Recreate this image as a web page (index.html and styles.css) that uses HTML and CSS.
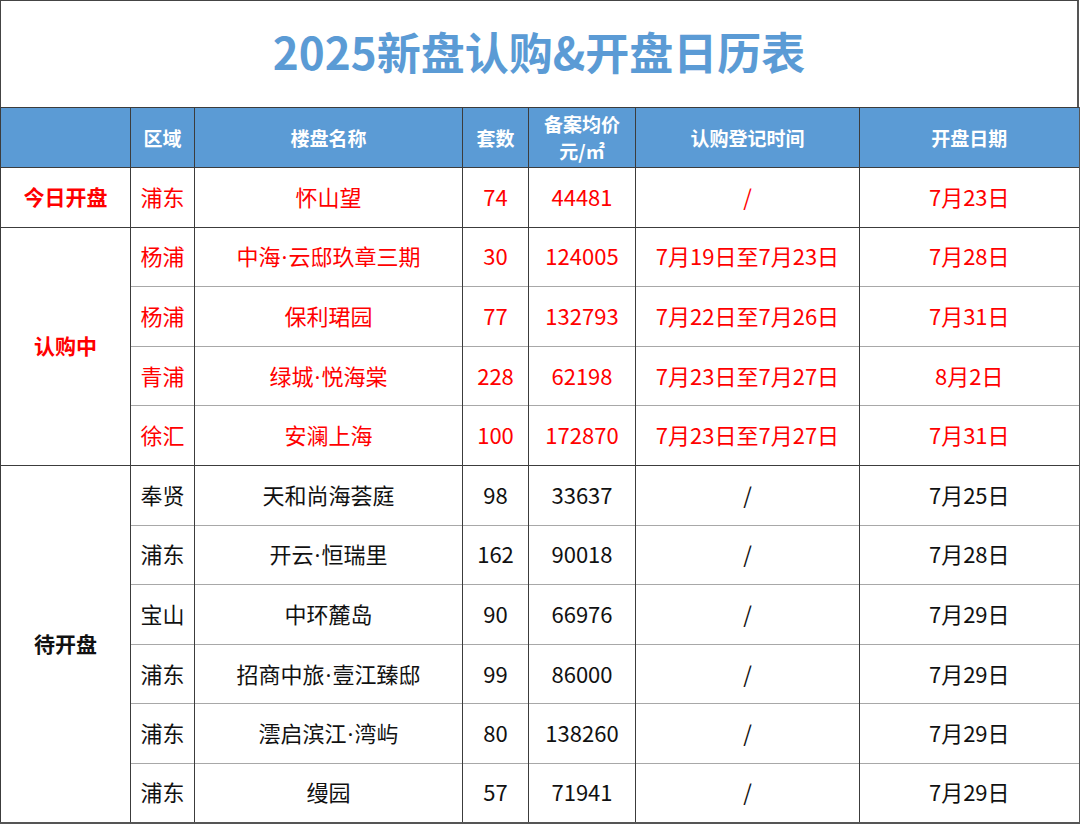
FILE: index.html
```html
<!DOCTYPE html>
<html lang="zh-CN">
<head>
<meta charset="utf-8">
<title>2025新盘认购&amp;开盘日历表</title>
<link rel="stylesheet" href="styles.css">
</head>
<body>
<div class="sheet">
  <div class="title">2025新盘认购&amp;开盘日历表</div>
  <table class="cal">
    <colgroup>
      <col class="c-cat"><col class="c-area"><col class="c-name"><col class="c-num"><col class="c-price"><col class="c-reg"><col class="c-open">
    </colgroup>
    <thead>
      <tr class="head">
        <th></th><th>区域</th><th>楼盘名称</th><th>套数</th><th class="two">备案均价<br>元/㎡</th><th>认购登记时间</th><th>开盘日期</th>
      </tr>
    </thead>
    <tbody>
      <tr class="red sec">
        <td class="cat">今日开盘</td><td>浦东</td><td>怀山望</td><td>74</td><td>44481</td><td>/</td><td>7月23日</td>
      </tr>
      <tr class="red sec">
        <td class="cat" rowspan="4">认购中</td><td>杨浦</td><td>中海<span class="dot">·</span>云邸玖章三期</td><td>30</td><td>124005</td><td>7月19日至7月23日</td><td>7月28日</td>
      </tr>
      <tr class="red">
        <td>杨浦</td><td>保利珺园</td><td>77</td><td>132793</td><td>7月22日至7月26日</td><td>7月31日</td>
      </tr>
      <tr class="red">
        <td>青浦</td><td>绿城<span class="dot">·</span>悦海棠</td><td>228</td><td>62198</td><td>7月23日至7月27日</td><td>8月2日</td>
      </tr>
      <tr class="red">
        <td>徐汇</td><td>安澜上海</td><td>100</td><td>172870</td><td>7月23日至7月27日</td><td>7月31日</td>
      </tr>
      <tr class="sec">
        <td class="cat black" rowspan="6">待开盘</td><td>奉贤</td><td>天和尚海荟庭</td><td>98</td><td>33637</td><td>/</td><td>7月25日</td>
      </tr>
      <tr>
        <td>浦东</td><td>开云<span class="dot">·</span>恒瑞里</td><td>162</td><td>90018</td><td>/</td><td>7月28日</td>
      </tr>
      <tr>
        <td>宝山</td><td>中环麓岛</td><td>90</td><td>66976</td><td>/</td><td>7月29日</td>
      </tr>
      <tr>
        <td>浦东</td><td>招商中旅<span class="dot">·</span>壹江臻邸</td><td>99</td><td>86000</td><td>/</td><td>7月29日</td>
      </tr>
      <tr>
        <td>浦东</td><td>澐启滨江<span class="dot">·</span>湾屿</td><td>80</td><td>138260</td><td>/</td><td>7月29日</td>
      </tr>
      <tr>
        <td>浦东</td><td>缦园</td><td>57</td><td>71941</td><td>/</td><td>7月29日</td>
      </tr>
    </tbody>
  </table>
</div>
</body>
</html>
```
FILE: styles.css
```css
* { box-sizing: border-box; }
html, body { margin: 0; padding: 0; background: #fff; }
body {
  font-family: "Noto Sans CJK SC", "Noto Sans", sans-serif;
  color: #111;
}
.sheet {
  width: 1080px;
  height: 824px;
  overflow: hidden;
}
.title {
  width: 1079px;
  height: 107px;
  border-top: 1px solid #444;
  border-left: 1px solid #444;
  border-right: 2px solid #555;
  display: flex;
  align-items: center;
  justify-content: center;
  padding-bottom: 6px;
  font-size: 44px;
  font-weight: 700;
  color: #5b9bd5;
}
.cal {
  width: 1079px;
  border-collapse: collapse;
  table-layout: fixed;
  border-left: 1px solid #444;
  border-right: 2px solid #555;
  border-bottom: 2px solid #555;
}
.c-cat { width: 130px; }
.c-area { width: 64px; }
.c-name { width: 268px; }
.c-num { width: 66px; }
.c-price { width: 107px; }
.c-reg { width: 224px; }
.c-open { width: 220px; }

.cal th, .cal td {
  padding: 0;
  text-align: center;
  vertical-align: middle;
  border-left: 1px solid #3c3c3c;
  border-right: 1px solid #3c3c3c;
  white-space: nowrap;
}
.head { height: 60px; }
.head th {
  background: #5b9bd5;
  color: #fff;
  font-size: 19px;
  font-weight: 700;
  border-top: 1px solid #3c3c3c;
  border-bottom: 1px solid #3c3c3c;
}
.head th.two { line-height: 27px; padding-bottom: 2px; }
.cal td {
  font-size: 22px;
  height: 59.6px;
  border-top: 1px solid #a8a8a8;
  padding-bottom: 3px;
}
.dot {
  font-family: "Noto Sans", "DejaVu Sans", sans-serif;
  margin: 0 1px;
}
.cal tr.sec td { border-top: 1px solid #3c3c3c; }
.cal td.cat {
  font-size: 21px;
  font-weight: 700;
  color: #f00;
  border-top: 1px solid #3c3c3c;
}
.cal td.cat.black { color: #111; }
.red td { color: #f00; }
```
